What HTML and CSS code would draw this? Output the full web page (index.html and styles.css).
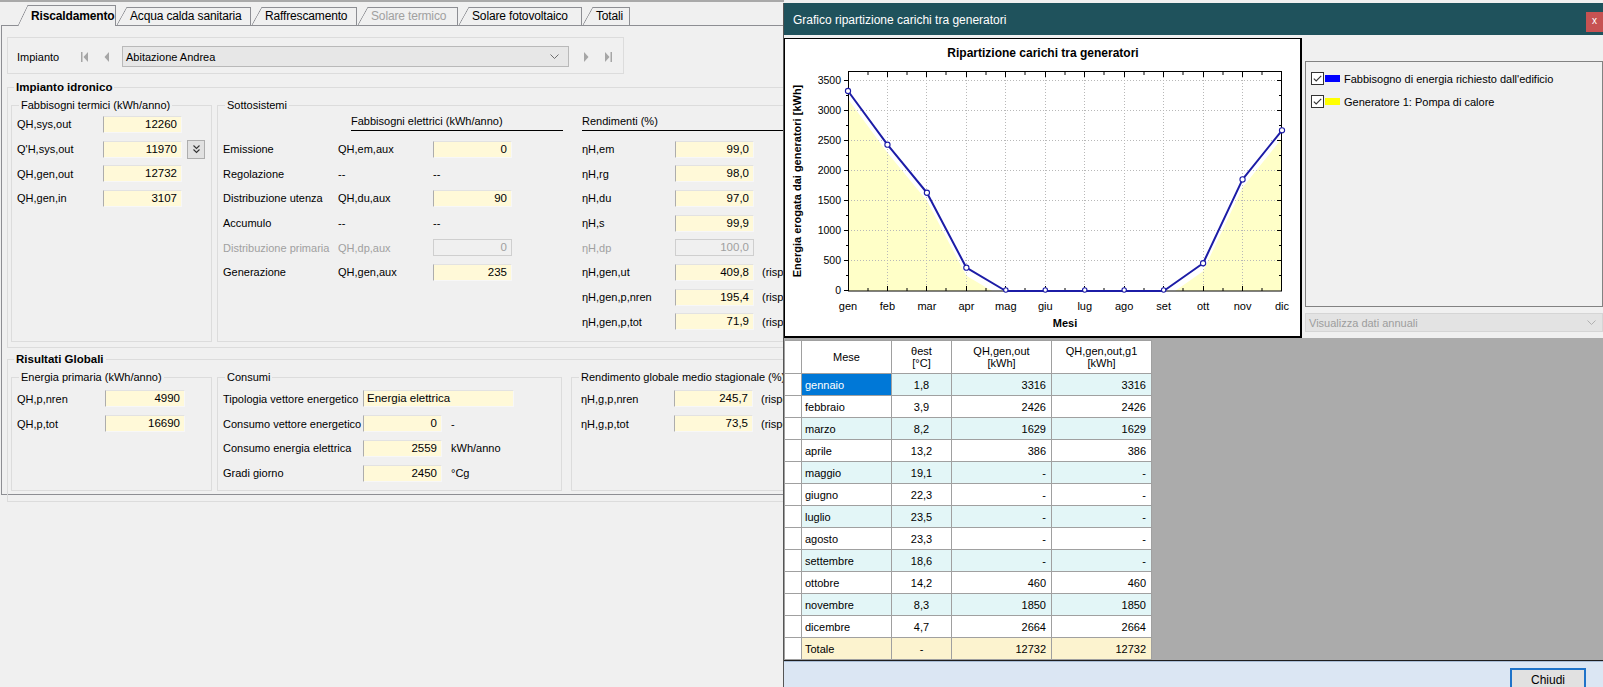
FILE: index.html
```html
<!DOCTYPE html>
<html lang="it">
<head>
<meta charset="utf-8">
<title>Riscaldamento</title>
<link rel="stylesheet" href="styles.css">
</head>
<body>
<div class="app">
  <div class="tabs">
    <div class="tab sel t1">Riscaldamento</div>
    <div class="tab t2">Acqua calda sanitaria</div>
    <div class="tab t3">Raffrescamento</div>
    <div class="tab dis t4">Solare termico</div>
    <div class="tab t5">Solare fotovoltaico</div>
    <div class="tab t6">Totali</div>
  </div>
  <div class="page">
    <div class="toolbar">
      <span class="tb-label">Impianto</span>
      <svg class="nav nav-first" width="8" height="10" viewBox="0 0 8 10"><rect x="0" y="0" width="1.5" height="10"/><path d="M7 0 L2.5 5 L7 10Z"/></svg>
      <svg class="nav nav-prev" width="6" height="10" viewBox="0 0 6 10"><path d="M5 0 L0.5 5 L5 10Z"/></svg>
      <div class="combo"><span>Abitazione Andrea</span><svg width="9" height="5" viewBox="0 0 9 5"><path d="M0.5 0.5 L4.5 4.5 L8.5 0.5" fill="none" stroke="#6d6d6d" stroke-width="1"/></svg></div>
      <svg class="nav nav-next" width="6" height="10" viewBox="0 0 6 10"><path d="M1 0 L5.5 5 L1 10Z"/></svg>
      <svg class="nav nav-last" width="8" height="10" viewBox="0 0 8 10"><path d="M1 0 L5.5 5 L1 10Z"/><rect x="6.5" y="0" width="1.5" height="10"/></svg>
    </div>

    <fieldset class="bigbox box1">
      <legend>Impianto idronico</legend>
      <div class="gb-line">
        <fieldset class="gb gb-left h1">
          <legend>Fabbisogni termici (kWh/anno)</legend>
          <div class="rows">
            <div class="row"><span class="lbl">QH,sys,out</span><span class="inp">12260</span></div>
            <div class="row"><span class="lbl">Q'H,sys,out</span><span class="inp">11970</span><span class="btn-mini"><svg width="11" height="11" viewBox="0 0 11 11"><path d="M2.5 1.5 L5.5 4.5 L8.5 1.5 M2.5 5.5 L5.5 8.5 L8.5 5.5" fill="none" stroke="#333" stroke-width="1.1"/></svg></span></div>
            <div class="row"><span class="lbl">QH,gen,out</span><span class="inp">12732</span></div>
            <div class="row"><span class="lbl">QH,gen,in</span><span class="inp">3107</span></div>
          </div>
        </fieldset>
        <fieldset class="gb gb-fill h1">
          <legend>Sottosistemi</legend>
          <div class="sub-grid">
            <span class="hdr hdr1">Fabbisogni elettrici (kWh/anno)</span>
            <span class="hdr hdr2">Rendimenti (%)</span>

            <span>Emissione</span><span>QH,em,aux</span><span class="inp">0</span><span></span><span>ηH,em</span><span class="inp">99,0</span><span></span><span></span>
            <span>Regolazione</span><span>--</span><span>--</span><span></span><span>ηH,rg</span><span class="inp">98,0</span><span></span><span></span>
            <span>Distribuzione utenza</span><span>QH,du,aux</span><span class="inp">90</span><span></span><span>ηH,du</span><span class="inp">97,0</span><span></span><span></span>
            <span>Accumulo</span><span>--</span><span>--</span><span></span><span>ηH,s</span><span class="inp">99,9</span><span></span><span></span>
            <span class="dim">Distribuzione primaria</span><span class="dim">QH,dp,aux</span><span class="inp off">0</span><span></span><span class="dim">ηH,dp</span><span class="inp off">100,0</span><span></span><span></span>
            <span>Generazione</span><span>QH,gen,aux</span><span class="inp">235</span><span></span><span>ηH,gen,ut</span><span class="inp">409,8</span><span></span><span class="note">(rispetto</span>
            <span></span><span></span><span></span><span></span><span>ηH,gen,p,nren</span><span class="inp">195,4</span><span></span><span class="note">(rispetto</span>
            <span></span><span></span><span></span><span></span><span>ηH,gen,p,tot</span><span class="inp">71,9</span><span></span><span class="note">(rispetto</span>
          </div>
        </fieldset>
      </div>
    </fieldset>

    <fieldset class="bigbox box2">
      <legend>Risultati Globali</legend>
      <div class="gb-line">
        <fieldset class="gb gb-left h2">
          <legend>Energia primaria (kWh/anno)</legend>
          <div class="rows rows2">
            <div class="row"><span class="lbl">QH,p,nren</span><span class="inp inp-ep">4990</span></div>
            <div class="row"><span class="lbl">QH,p,tot</span><span class="inp inp-ep">16690</span></div>
          </div>
        </fieldset>
        <fieldset class="gb gb-cons h2">
          <legend>Consumi</legend>
          <div class="cons-grid">
            <span>Tipologia vettore energetico</span><span class="inp inp-text">Energia elettrica</span><span></span>
            <span>Consumo vettore energetico</span><span class="inp">0</span><span>-</span>
            <span>Consumo energia elettrica</span><span class="inp">2559</span><span>kWh/anno</span>
            <span>Gradi giorno</span><span class="inp">2450</span><span>°Cg</span>
          </div>
        </fieldset>
        <fieldset class="gb gb-fill gb-rend h2">
          <legend>Rendimento globale medio stagionale (%)</legend>
          <div class="rend-grid">
            <span>ηH,g,p,nren</span><span class="inp">245,7</span><span class="note">(rispetto</span>
            <span>ηH,g,p,tot</span><span class="inp">73,5</span><span class="note">(rispetto</span>
          </div>
        </fieldset>
      </div>
    </fieldset>
  </div>
</div>

<div class="dialog">
  <div class="dlg-title">
    <span class="dlg-caption">Grafico ripartizione carichi tra generatori</span>
    <span class="dlg-close">x</span>
  </div>
  <div class="dlg-main">
    <div class="chart-panel">
      <svg class="chart" width="515" height="297" viewBox="785 39 515 297" font-family="Liberation Sans, Arial, sans-serif">
        <defs>
          <clipPath id="plotclip"><rect x="848" y="71" width="434" height="220"/></clipPath>
        </defs>
        <text x="1043" y="57" text-anchor="middle" font-size="12" font-weight="bold">Ripartizione carichi tra generatori</text>
        <polygon clip-path="url(#plotclip)" fill="#ffffc8" points="848,291 848,99 887.45,152.7 926.91,200.75 966.36,275.7 1005.82,299 1163.64,299 1203.09,271.3 1242.55,187.4 1282,138.3 1282,291"/>
        <g stroke="#b8b8b8" stroke-width="1" stroke-dasharray="1 2">
          <line x1="887.5" y1="71" x2="887.5" y2="291"/>
          <line x1="926.5" y1="71" x2="926.5" y2="291"/>
          <line x1="966.5" y1="71" x2="966.5" y2="291"/>
          <line x1="1005.5" y1="71" x2="1005.5" y2="291"/>
          <line x1="1045.5" y1="71" x2="1045.5" y2="291"/>
          <line x1="1084.5" y1="71" x2="1084.5" y2="291"/>
          <line x1="1124.5" y1="71" x2="1124.5" y2="291"/>
          <line x1="1163.5" y1="71" x2="1163.5" y2="291"/>
          <line x1="1203.5" y1="71" x2="1203.5" y2="291"/>
          <line x1="1242.5" y1="71" x2="1242.5" y2="291"/>
          <line x1="848" y1="260.5" x2="1282" y2="260.5"/>
          <line x1="848" y1="230.5" x2="1282" y2="230.5"/>
          <line x1="848" y1="200.5" x2="1282" y2="200.5"/>
          <line x1="848" y1="170.5" x2="1282" y2="170.5"/>
          <line x1="848" y1="140.5" x2="1282" y2="140.5"/>
          <line x1="848" y1="110.5" x2="1282" y2="110.5"/>
          <line x1="848" y1="80.5" x2="1282" y2="80.5"/>
        </g>
        <rect x="848.5" y="71.5" width="433" height="219.5" fill="none" stroke="#000" stroke-width="1"/>
        <g stroke="#000" stroke-width="1">
          <path d="M848.5 291 v-5 M868 291 v-3 M887.5 291 v-5 M907 291 v-3 M926.5 291 v-5 M946 291 v-3 M966.5 291 v-5 M986 291 v-3 M1005.5 291 v-5 M1025 291 v-3 M1045.5 291 v-5 M1065 291 v-3 M1084.5 291 v-5 M1104 291 v-3 M1124.5 291 v-5 M1144 291 v-3 M1163.5 291 v-5 M1183 291 v-3 M1203.5 291 v-5 M1223 291 v-3 M1242.5 291 v-5 M1262 291 v-3 M1281.5 291 v-5"/>
          <path d="M868 72 v3 M887.5 72 v5 M907 72 v3 M926.5 72 v5 M946 72 v3 M966.5 72 v5 M986 72 v3 M1005.5 72 v5 M1025 72 v3 M1045.5 72 v5 M1065 72 v3 M1084.5 72 v5 M1104 72 v3 M1124.5 72 v5 M1144 72 v3 M1163.5 72 v5 M1183 72 v3 M1203.5 72 v5 M1223 72 v3 M1242.5 72 v5 M1262 72 v3"/>
          <path d="M844 290.5 h4 M846 275.5 h2 M844 260.5 h4 M846 245.5 h2 M844 230.5 h4 M846 215.5 h2 M844 200.5 h4 M846 185.5 h2 M844 170.5 h4 M846 155.5 h2 M844 140.5 h4 M846 125.5 h2 M844 110.5 h4 M846 95.5 h2 M844 80.5 h4"/>
          <path d="M1281 260.5 h-4 M1281 230.5 h-4 M1281 200.5 h-4 M1281 170.5 h-4 M1281 140.5 h-4 M1281 110.5 h-4 M1281 80.5 h-4 M1281 275.5 h-2 M1281 245.5 h-2 M1281 215.5 h-2 M1281 185.5 h-2 M1281 155.5 h-2 M1281 125.5 h-2 M1281 95.5 h-2"/>
        </g>
        <polyline fill="none" stroke="#1c1ca6" stroke-width="2" stroke-linejoin="round" points="848,91 887.45,144.68 926.91,192.75 966.36,267.72 1005.82,291 1045.27,291 1084.73,291 1124.18,291 1163.64,291 1203.09,263.26 1242.55,179.42 1282,130.32"/>
        <g fill="#fff" stroke="#1c1ca6" stroke-width="1.1">
          <circle cx="848" cy="91" r="2.6"/>
          <circle cx="887.45" cy="144.68" r="2.6"/>
          <circle cx="926.91" cy="192.75" r="2.6"/>
          <circle cx="966.36" cy="267.72" r="2.6"/>
          <circle cx="1005.82" cy="290" r="2.2"/>
          <circle cx="1045.27" cy="290" r="2.2"/>
          <circle cx="1084.73" cy="290" r="2.2"/>
          <circle cx="1124.18" cy="290" r="2.2"/>
          <circle cx="1163.64" cy="290" r="2.2"/>
          <circle cx="1203.09" cy="263.26" r="2.6"/>
          <circle cx="1242.55" cy="179.42" r="2.6"/>
          <circle cx="1282" cy="130.32" r="2.6"/>
        </g>
        <g font-size="10.5" text-anchor="end" fill="#000">
          <text x="841" y="84">3500</text>
          <text x="841" y="114">3000</text>
          <text x="841" y="144">2500</text>
          <text x="841" y="174">2000</text>
          <text x="841" y="204">1500</text>
          <text x="841" y="234">1000</text>
          <text x="841" y="264">500</text>
          <text x="841" y="294">0</text>
        </g>
        <g font-size="11" text-anchor="middle" fill="#000">
          <text x="848" y="310">gen</text>
          <text x="887.45" y="310">feb</text>
          <text x="926.91" y="310">mar</text>
          <text x="966.36" y="310">apr</text>
          <text x="1005.82" y="310">mag</text>
          <text x="1045.27" y="310">giu</text>
          <text x="1084.73" y="310">lug</text>
          <text x="1124.18" y="310">ago</text>
          <text x="1163.64" y="310">set</text>
          <text x="1203.09" y="310">ott</text>
          <text x="1242.55" y="310">nov</text>
          <text x="1282" y="310">dic</text>
        </g>
        <text x="1065" y="327" text-anchor="middle" font-size="11" font-weight="bold">Mesi</text>
        <text transform="translate(801 181) rotate(-90)" text-anchor="middle" font-size="11" font-weight="bold">Energia erogata dai generatori [kWh]</text>
      </svg>
    </div>
    <div class="side">
      <div class="legend-box">
        <div class="leg-item">
          <svg class="chk" width="13" height="13" viewBox="0 0 13 13"><rect x="0.5" y="0.5" width="12" height="12" fill="#fff" stroke="#333"/><path d="M2.8 6.6 L5.2 9 L10.2 3.8" fill="none" stroke="#333" stroke-width="1.1"/></svg>
          <span class="sw sw-blue"></span>
          <span>Fabbisogno di energia richiesto dall'edificio</span>
        </div>
        <div class="leg-item">
          <svg class="chk" width="13" height="13" viewBox="0 0 13 13"><rect x="0.5" y="0.5" width="12" height="12" fill="#fff" stroke="#333"/><path d="M2.8 6.6 L5.2 9 L10.2 3.8" fill="none" stroke="#333" stroke-width="1.1"/></svg>
          <span class="sw sw-yellow"></span>
          <span>Generatore 1: Pompa di calore</span>
        </div>
      </div>
      <div class="combo-dis"><span>Visualizza dati annuali</span><svg width="9" height="5" viewBox="0 0 9 5"><path d="M0.5 0.5 L4.5 4.5 L8.5 0.5" fill="none" stroke="#b0b0b0" stroke-width="1"/></svg></div>
    </div>
  </div>
  <div class="dlg-grid">
    <table class="grid">
      <colgroup><col class="c0"><col class="c1"><col class="c2"><col class="c3"><col class="c4"></colgroup>
      <thead>
        <tr><th></th><th>Mese</th><th>θest<br>[°C]</th><th>QH,gen,out<br>[kWh]</th><th>QH,gen,out,g1<br>[kWh]</th></tr>
      </thead>
      <tbody>
        <tr class="odd"><td class="rh"></td><td class="m selc">gennaio</td><td class="c">1,8</td><td class="n">3316</td><td class="n">3316</td></tr>
        <tr><td class="rh"></td><td class="m">febbraio</td><td class="c">3,9</td><td class="n">2426</td><td class="n">2426</td></tr>
        <tr class="odd"><td class="rh"></td><td class="m">marzo</td><td class="c">8,2</td><td class="n">1629</td><td class="n">1629</td></tr>
        <tr><td class="rh"></td><td class="m">aprile</td><td class="c">13,2</td><td class="n">386</td><td class="n">386</td></tr>
        <tr class="odd"><td class="rh"></td><td class="m">maggio</td><td class="c">19,1</td><td class="n">-</td><td class="n">-</td></tr>
        <tr><td class="rh"></td><td class="m">giugno</td><td class="c">22,3</td><td class="n">-</td><td class="n">-</td></tr>
        <tr class="odd"><td class="rh"></td><td class="m">luglio</td><td class="c">23,5</td><td class="n">-</td><td class="n">-</td></tr>
        <tr><td class="rh"></td><td class="m">agosto</td><td class="c">23,3</td><td class="n">-</td><td class="n">-</td></tr>
        <tr class="odd"><td class="rh"></td><td class="m">settembre</td><td class="c">18,6</td><td class="n">-</td><td class="n">-</td></tr>
        <tr><td class="rh"></td><td class="m">ottobre</td><td class="c">14,2</td><td class="n">460</td><td class="n">460</td></tr>
        <tr class="odd"><td class="rh"></td><td class="m">novembre</td><td class="c">8,3</td><td class="n">1850</td><td class="n">1850</td></tr>
        <tr><td class="rh"></td><td class="m">dicembre</td><td class="c">4,7</td><td class="n">2664</td><td class="n">2664</td></tr>
        <tr class="tot"><td class="rh"></td><td class="m">Totale</td><td class="c">-</td><td class="n">12732</td><td class="n">12732</td></tr>
      </tbody>
    </table>
  </div>
  <div class="dlg-bottom">
    <button class="btn-close" type="button">Chiudi</button>
  </div>
</div>
</body>
</html>
```

FILE: styles.css
```css
* { box-sizing: border-box; }
html, body { margin: 0; padding: 0; }
body {
  width: 1603px;
  height: 687px;
  overflow: hidden;
  position: relative;
  background: #f0f0f0;
  font-family: "Liberation Sans", Arial, sans-serif;
  font-size: 11px;
  color: #000;
}

/* ---------- main window ---------- */
.app {
  width: 784px;
  height: 687px;
  overflow: hidden;
  border-top: 2px solid #a9a9a9;
  padding: 0 0 0 1px;
}
.tabs {
  height: 23px;
  display: flex;
  align-items: flex-end;
  padding-left: 16px;
  font-size: 12px;
  letter-spacing: -0.15px;
}
.tab {
  position: relative;
  height: 18px;
  margin-left: 11px;
  padding: 0 0 0 3px;
  line-height: 17px;
  background: #f0f0f0;
  border-top: 1px solid #8d8e93;
  border-right: 1px solid #8d8e93;
  white-space: nowrap;
  flex: none;
}
.tab::before {
  content: "";
  position: absolute;
  left: -10px;
  top: -1px;
  bottom: 0;
  width: 10px;
  background: linear-gradient(to top left, #f0f0f0 calc(50% - 0.7px), #8d8e93 50%, transparent calc(50% + 0.7px));
}
.tab.t1 { width: 88px; }
.tab.t2 { width: 124px; }
.tab.t3 { width: 95px; }
.tab.t4 { width: 90px; }
.tab.t5 { width: 113px; }
.tab.t6 { width: 37px; }
.tab.sel {
  height: 21px;
  margin-bottom: -1px;
  line-height: 20px;
  font-weight: bold;
  z-index: 2;
  background: #f0f0f0;
}
.tab.dis { color: #a0a0a0; }

.page {
  width: 1000px;
  height: 470px;
  border: 1px solid #8d8e93;
  padding: 11px 4px 0 5px;
}

.toolbar {
  width: 617px;
  height: 37px;
  border: 1px solid #dcdcdc;
  display: flex;
  align-items: center;
  padding: 2px 0 0 9px;
}
.tb-label { width: 64px; flex: none; }
.nav { fill: #a6a6a6; flex: none; }
.nav-prev { margin-left: 15px; }
.combo {
  margin-left: 12px;
  width: 447px;
  height: 21px;
  background: #e7e7e7;
  border: 1px solid #b9b9b9;
  display: flex;
  align-items: center;
  justify-content: space-between;
  padding: 0 9px 0 3px;
  flex: none;
}
.nav-next { margin-left: 14px; }
.nav-last { margin-left: 15px; }

fieldset {
  margin: 0;
  min-width: 0;
  border: 1px solid #dcdcdc;
}
legend {
  padding: 0 2px;
  line-height: 13px;
}
.bigbox {
  padding: 5px 0 5px 3px;
}
.bigbox > legend {
  font-weight: bold;
  font-size: 11.5px;
  line-height: 14px;
  margin-left: 3px;
}
.box1 { margin-top: 6px; }
.box2 { margin-top: 4px; padding-bottom: 10px; }

.gb-line { display: flex; }
.gb { padding: 0; }
.gb > legend { margin-left: 7px; }
.gb-left { width: 201px; flex: none; margin-right: 5px; }
.gb-fill { flex: 1; }
.h1 { height: 243px; }
.h2 { height: 120px; }

.rows { padding-left: 5px; }
.rows2 { padding-top: 2.6px; }
.row {
  height: 24.7px;
  display: flex;
  align-items: center;
}
.lbl { width: 86px; flex: none; }
.inp {
  display: block;
  width: 79px;
  height: 17px;
  line-height: 15px;
  text-align: right;
  padding-right: 4px;
  background: #fff9d8;
  border-style: solid;
  border-width: 1px;
  border-color: #e2e2e2 #f7f7f7 #f7f7f7 #adadad;
  font-size: 11.5px;
  white-space: nowrap;
  overflow: hidden;
}
.inp.off {
  background: #f0f0f0;
  color: #a0a0a0;
  border-color: #cfcfcf;
}
.inp-ep { width: 80px; margin-left: 2px; }
.btn-mini {
  width: 18px;
  height: 19px;
  margin-left: 5px;
  background: #e1e1e1;
  border: 1px solid #adadad;
  display: flex;
  align-items: center;
  justify-content: center;
}

.sub-grid {
  display: grid;
  grid-template-columns: 115px 95px 77px 72px 93px 79px 8px 1fr;
  grid-auto-rows: 24.7px;
  align-items: center;
  padding-left: 5px;
  white-space: nowrap;
}
.hdr {
  line-height: 13px;
  padding-bottom: 2px;
  border-bottom: 1px solid #000;
  align-self: center;
  margin-top: -2px;
}
.hdr1 { grid-column: 2 / 5; margin-left: 13px; width: 212px; }
.hdr2 { grid-column: 5 / -1; }
.dim { color: #a0a0a0; }
.note { overflow: hidden; }

.gb-cons { width: 345px; flex: none; margin-right: 9px; }
.cons-grid {
  display: grid;
  grid-template-columns: 140px 75px 1fr;
  grid-auto-rows: 24.7px;
  align-items: center;
  padding: 2.6px 0 0 5px;
  white-space: nowrap;
}
.cons-grid > span:nth-child(3n) { padding-left: 13px; }
.inp-text { width: 151px; text-align: left; padding-left: 3px; }

.rend-grid {
  display: grid;
  grid-template-columns: 93px 79px 8px 1fr;
  grid-auto-rows: 24.7px;
  align-items: center;
  padding: 2.6px 0 0 9px;
  white-space: nowrap;
}
.rend-grid > span:nth-child(3n) { grid-column: 4; }

/* ---------- dialog ---------- */
.dialog {
  position: absolute;
  left: 783px;
  top: 3px;
  width: 820px;
  height: 684px;
  border-left: 1px solid #555;
  background: #f0f0f0;
  display: flex;
  flex-direction: column;
  z-index: 10;
}
.dlg-title {
  height: 32px;
  flex: none;
  background: #1f525c;
  color: #fff;
  font-size: 12px;
  display: flex;
  justify-content: space-between;
  align-items: flex-start;
}
.dlg-caption { margin: 10px 0 0 9px; }
.dlg-close {
  width: 17px;
  height: 20px;
  margin-top: 9px;
  background: #c75252;
  color: #fff;
  font-size: 10px;
  line-height: 18px;
  text-align: center;
}
.dlg-main {
  height: 303px;
  flex: none;
  padding-top: 3px;
  display: flex;
}
.chart-panel {
  width: 518px;
  height: 300px;
  flex: none;
  background: #fff;
  border: 1px solid #000;
  border-right-width: 2px;
  border-bottom-width: 2px;
}
.chart { display: block; }
.side {
  flex: 1;
  padding: 23px 0 0 3px;
}
.legend-box {
  height: 246px;
  border: 1px solid #828282;
  padding: 5px 0 0 5px;
}
.leg-item {
  height: 23px;
  display: flex;
  align-items: center;
}
.chk { flex: none; }
.sw {
  width: 15px;
  height: 7px;
  margin: 0 4px 0 1px;
  flex: none;
}
.sw-blue { background: #0000ff; }
.sw-yellow { background: #ffff00; }
.combo-dis {
  margin-top: 6px;
  height: 19px;
  background: #e3e3e3;
  border: 1px solid #d5d5d5;
  color: #9d9d9d;
  display: flex;
  align-items: center;
  justify-content: space-between;
  padding: 0 6px 0 3px;
}

.dlg-grid {
  height: 322px;
  flex: none;
  background: #ababab;
  padding-top: 2px;
}
.grid {
  border-collapse: collapse;
  table-layout: fixed;
  width: 367px;
  background: #fff;
  font-size: 11px;
}
.c0 { width: 17px; }
.c1 { width: 90px; }
.c2 { width: 60px; }
.c3 { width: 100px; }
.c4 { width: 100px; }
.grid th, .grid td {
  border: 1px solid #a0a0a0;
  padding: 0 5px;
  white-space: nowrap;
}
.grid th {
  height: 33px;
  font-weight: normal;
  text-align: center;
  line-height: 12px;
  background: #fff;
}
.grid td { height: 22px; }
.grid tr.odd td { background: #e3f6f7; }
.grid tr.tot td { background: #fcf3cf; }
.grid td.rh { background: #fff !important; padding: 0; }
.grid td.m { padding-left: 3px; }
.grid td.c { text-align: center; }
.grid td.n { text-align: right; }
.grid td.selc { background: #0078d7 !important; color: #fff; }

.dlg-bottom {
  flex: 1;
  border-top: 1px solid #1e1e1e;
  box-shadow: inset 0 1px 0 #a9bdd6;
  background: #dbe6f3;
  display: flex;
  justify-content: flex-end;
  align-items: flex-start;
  padding: 7px 17px 0 0;
}
.btn-close {
  width: 76px;
  height: 23px;
  border: 2px solid #1f73c9;
  background: #e1e1e1;
  font-family: "Liberation Sans", Arial, sans-serif;
  font-size: 12px;
  color: #000;
  padding: 0;
}
```
